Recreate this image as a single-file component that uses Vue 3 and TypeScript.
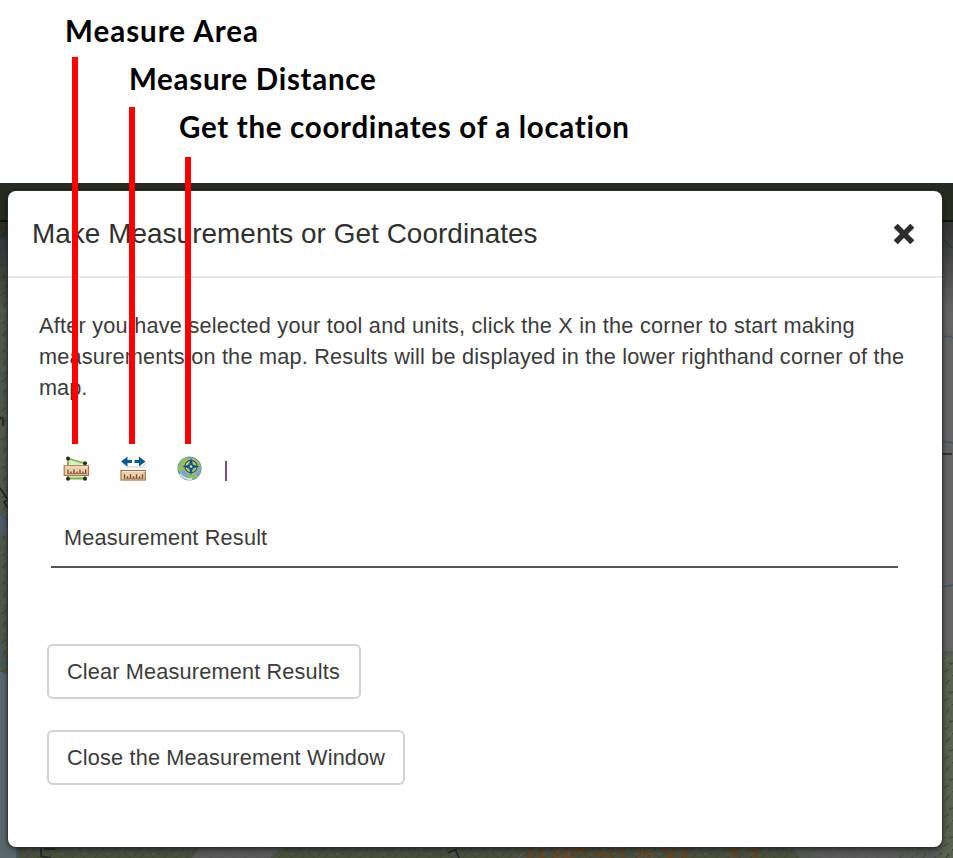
<script setup lang="ts">
import { ref } from 'vue'

interface Callout {
  id: string
  label: string
}

const callouts: Callout[] = [
  { id: 'area', label: 'Measure Area' },
  { id: 'distance', label: 'Measure Distance' },
  { id: 'location', label: 'Get the coordinates of a location' },
]

const active = ref<string>('')
</script>

<template>
  <main class="page">
    <section class="callouts">
      <div v-for="c in callouts" :key="c.id" class="callout" :class="c.id">{{ c.label }}</div>
    </section>

    <section class="stage">
      <svg class="map" width="953" height="675" viewBox="0 183 953 675" aria-hidden="true">
        <defs>
          <linearGradient id="shade" x1="0" y1="0" x2="0" y2="1">
            <stop offset="0" stop-color="#000" stop-opacity=".5" />
            <stop offset="1" stop-color="#000" stop-opacity="0" />
          </linearGradient>
          <pattern id="terrain" width="23" height="29" patternUnits="userSpaceOnUse">
            <path d="M1 5l5-3M9 9l4-3M17 4l4 2M3 17l3-4M11 20l5-4M19 14l3-2M6 26l4-1M17 27l4-4" stroke="#363d2c" stroke-width="1.3" opacity=".65" />
            <path d="M5 10l6-4M14 14l4-2M2 23l4-3M13 25l5-2" stroke="#69705f" stroke-width="1.2" opacity=".5" />
          </pattern>
        </defs>
        <rect y="183" width="953" height="675" fill="#565955" />
        <rect y="221" width="10" height="456" fill="#51584b" />
        <rect y="221" width="10" height="456" fill="url(#terrain)" />
        <path d="M0 245q5 8 4 20t4 12v-40H0zM0 515q5 1 8 8v15l-8-4z" fill="#515d66" />
        <rect y="672" width="17" height="186" fill="#5b686d" />
        <rect x="940" y="221" width="13" height="430" fill="#646464" />
        <rect x="940" y="655" width="13" height="203" fill="#58604f" />
        <rect x="940" y="655" width="13" height="203" fill="url(#terrain)" />
        <path d="M17 846h183l-8 12H16zM285 846h245l-12 12H270zM530 846h250l40 12H520z" fill="#4a5040" />
        <rect x="17" y="845" width="936" height="13" fill="url(#terrain)" opacity=".7" />
        <path d="M200 847h80l-10 11h-75zM790 847h120l-12 11H800z" fill="#5b5b5b" opacity=".7" />
        <g fill="none" stroke="#3b5a6f" stroke-width="1.3">
          <path d="M0 375l7-5M0 390q7 4 3 12M0 515q5 1 8 7M0 643q3 13 3 22l5-3v10l-5 1M17 847v11" />
          <path d="M942 240q4 0 6 5l5 3M942 338l5-2 6 2M942 441l11 2M942 587l11-2" stroke="#40585b" />
        </g>
        <path d="M0 420q0-4 3-2v8M0 488l8 12-4 2 4 6M41 847v9l10 2M44 849h11M455 849l4 9M457 849l-9 4M942 454h10" fill="none" stroke="#252525" stroke-width="1.7" />
        <g fill="none" stroke="#6d421b" stroke-width="2.5">
          <path d="M532 847q0 8-5 11M542 847l-2 8 4 3M572 857l8-9 7 7M595 855h12M614 847l-4 11M621 847l3 11M662 847l8 10 5-10M687 848l-5 6 5 4M730 848l7 9M738 848l-8 5M750 847l7 7-2 4" />
        </g>
        <g fill="#7a4718" font-family="Liberation Sans, sans-serif" font-size="16">
          <text x="552" y="858">23</text>
          <text x="635" y="861">26</text>
        </g>
        <rect y="221" width="953" height="90" fill="url(#shade)" />
        <rect y="183" width="953" height="38" fill="#282b20" />
        <rect y="220" width="953" height="2" fill="#11120e" />
      </svg>

      <div class="dialog" role="dialog">
        <header class="head">
          <h1 class="title">Make Measurements or Get Coordinates</h1>
          <button class="close" type="button">
            <svg width="24" height="24" viewBox="0 0 24 24">
              <path d="M3.7 3.7L20.3 20.3M20.3 3.7L3.7 20.3" stroke="#2c2c2c" stroke-width="5.6" />
            </svg>
          </button>
        </header>

        <div class="body">
          <p class="intro">
            <span class="l1">After you have selected your tool and units, click the X in the corner to start making</span><br />
            <span class="l2">measurements on the map. Results will be displayed in the lower righthand corner of the</span><br />
            <span>map.</span>
          </p>

          <div class="tools">
            <button class="tool" type="button" @click="active = 'area'">
              <svg width="28" height="28" viewBox="0 0 28 28">
                <path d="M5 3.5L22 8.5V23.5H5z" fill="#d9eec2" stroke="#83b34b" stroke-width="1.8" />
                <g fill="#252e20"><circle cx="5" cy="3.5" r="2" /><circle cx="22" cy="8.3" r="2" /><circle cx="5" cy="23.7" r="2" /><circle cx="22" cy="23.7" r="2" /></g>
                <rect x="1.2" y="10.8" width="24.3" height="9.6" fill="#ecd0ad" stroke="#a57649" stroke-width="1.2" />
                <path d="M2 11.7h23" stroke="#f7e3c8" />
                <path d="M5 18.5v-4M8 18.5v-2M11 18.5v-4M14 18.5v-2M17 18.5v-4M20 18.5v-2M22.7 18.5v-4" stroke="#70492b" stroke-width="1.3" />
                <path d="M4 18.5h20" stroke="#966d47" />
              </svg>
            </button>
            <button class="tool" type="button" @click="active = 'distance'">
              <svg width="28" height="28" viewBox="0 0 28 28">
                <path d="M3 9l5 3h14l4-4" fill="none" stroke="#d5dbe0" stroke-width="1.5" />
                <path d="M1 6.5L7.5 1.5V5H12v3H7.5v3.5zM25.5 6.5L19 1.5V5H14.5v3H19v3.5z" fill="#075a8e" />
                <rect x="1" y="15.5" width="24.3" height="9.5" fill="#ecd0ad" stroke="#a57649" stroke-width="1.2" />
                <path d="M2 16.5h23" stroke="#f7e3c8" />
                <path d="M4.5 23.3v-4M7.5 23.3v-2M10.5 23.3v-4M13.5 23.3v-2M16.5 23.3v-4M19.5 23.3v-2M22.5 23.3v-4" stroke="#70492b" stroke-width="1.3" />
                <path d="M4 23.3h19.5" stroke="#966d47" />
              </svg>
            </button>
            <button class="tool" type="button" @click="active = 'location'">
              <svg width="28" height="28" viewBox="0 0 28 28">
                <circle cx="13.5" cy="13.5" r="11.5" fill="#79a9cc" stroke="#7594a5" stroke-width="1.2" />
                <path d="M3.5 8Q6 3 11 2.5l3 3-4 4v4l-5 3-3-2zM18 3q7 4 6.5 11l-4-1-3-5zM10 21l7-3 5 2q-4 5-8 5z" fill="#92bd65" />
                <path d="M4 19q5 6 12 5" fill="none" stroke="#d8e8ee" stroke-width="1.8" />
                <circle cx="15" cy="11.5" r="5.8" fill="none" stroke="#e5c84a" stroke-width="3" />
                <circle cx="15" cy="11.5" r="6.2" fill="none" stroke="#164d70" stroke-width="1.2" />
                <path d="M15 2.5l1.8 7.2 7.2 1.8-7.2 1.8-1.8 7.2-1.8-7.2-7.2-1.8 7.2-1.8z" fill="#07577e" />
                <circle cx="15" cy="11.5" r="1.3" fill="#eee395" />
              </svg>
            </button>
            <span class="bar"></span>
          </div>

          <div class="result">Measurement Result</div>

          <div class="actions">
            <button class="btn clear" type="button">Clear Measurement Results</button>
            <button class="btn finish" type="button">Close the Measurement Window</button>
          </div>
        </div>
      </div>
    </section>

    <i class="pointer p-area"></i>
    <i class="pointer p-distance"></i>
    <i class="pointer p-location"></i>
  </main>
</template>

<style>
body {
  margin: 0;
  background: #fff;
}
</style>

<style scoped>
.page {
  position: relative;
  width: 953px;
  height: 858px;
  overflow: hidden;
  font-family: 'Liberation Sans', Arial, sans-serif;
  color: #3b3b3b;
}
.callouts {
  box-sizing: border-box;
  height: 183px;
  padding-top: 7px;
  font: 700 29.5px/48px Lato, Carlito, sans-serif;
  font-variant-ligatures: none;
  letter-spacing: 0.76px;
  color: #000;
  white-space: nowrap;
}
.callout.area { padding-left: 65px; letter-spacing: 1px; }
.callout.distance { padding-left: 129px; letter-spacing: 0.7px; }
.callout.location { padding-left: 179px; letter-spacing: 0.7px; }
.stage {
  position: relative;
  box-sizing: border-box;
  height: 675px;
  padding: 8px 11px 11px 8px;
}
.map {
  position: absolute;
  left: 0;
  top: 0;
}
.dialog {
  position: relative;
  height: 656px;
  border-radius: 8px;
  background: #fff;
  box-shadow: 0 0 0 1px rgba(45, 50, 43, 0.65), 0 2px 7px rgba(0, 0, 0, 0.65);
}
.head {
  box-sizing: border-box;
  height: 87px;
  border-bottom: 2px solid #e8e8e8;
  display: flex;
  align-items: center;
  justify-content: space-between;
  padding: 0 26px 0 24px;
}
.title {
  margin: 0;
  font-size: 27.9px;
  font-weight: 400;
  line-height: 36px;
  letter-spacing: 0.05px;
  white-space: nowrap;
  color: #303030;
}
button {
  appearance: none;
  font: inherit;
  color: inherit;
  background: none;
  border: 0;
  margin: 0;
  padding: 0;
}
.close, .close svg, .tool, .tool svg { display: block; }
.body { padding: 32px 44px 0 31px; }
.intro {
  margin: 0;
  font-size: 21.7px;
  line-height: 31px;
  white-space: nowrap;
}
.l1 { letter-spacing: 0.235px; }
.l2 { letter-spacing: 0.205px; }
.tools {
  display: flex;
  align-items: center;
  margin-top: 52px;
  padding-left: 24px;
  gap: 28.5px;
  height: 28px;
}
.bar {
  width: 2px;
  height: 20px;
  margin-left: -8px;
  margin-top: 4px;
  background: #78507e;
}
.result {
  box-sizing: border-box;
  margin: 39px 0 0 12px;
  width: 847px;
  height: 46px;
  padding-left: 13px;
  border-bottom: 2px solid #555;
  font-size: 21.7px;
  line-height: 31px;
  letter-spacing: 0.18px;
}
.actions {
  display: flex;
  flex-direction: column;
  align-items: flex-start;
  gap: 31px;
  padding: 76px 0 0 8px;
}
.btn {
  box-sizing: border-box;
  height: 55px;
  border: 2px solid #d2d2d2;
  border-radius: 6px;
  font-size: 21.7px;
  line-height: 51px;
  letter-spacing: 0.17px;
  white-space: nowrap;
  text-align: left;
  padding-left: 18px;
}
.clear { width: 314px; }
.finish { width: 358px; }
.pointer {
  position: absolute;
  width: 6px;
  background: #f00;
}
.p-area { left: 72px; top: 57px; height: 387px; }
.p-distance { left: 129px; top: 107px; height: 337px; }
.p-location { left: 185px; top: 157px; height: 287px; }
</style>
